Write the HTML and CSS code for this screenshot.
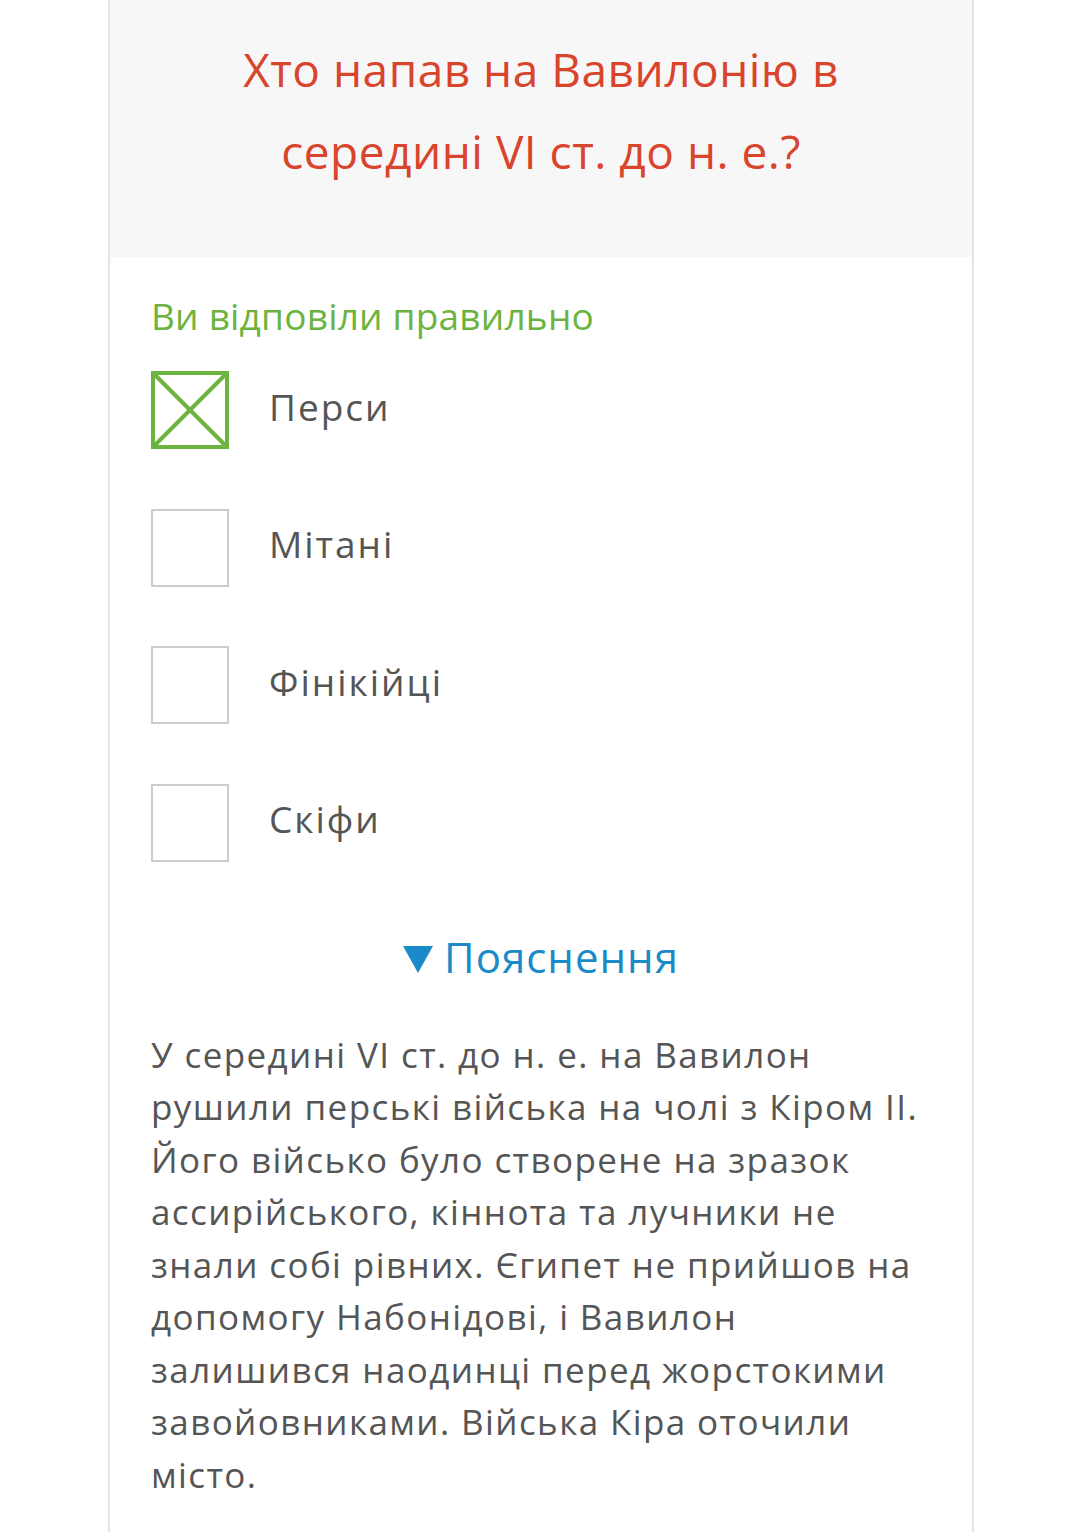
FILE: index.html
```html
<!DOCTYPE html>
<html lang="uk">
<head>
  <meta charset="UTF-8" />
  <meta name="viewport" content="width=device-width, initial-scale=1.0" />
  <title>Тест</title>
  <link rel="stylesheet" href="styles.css">
</head>
<body>

  <div class="quiz-card">
    <!-- Question -->
    <div class="question">
      <h1>Хто напав на Вавилонію в середині VI ст. до н. е.?</h1>
    </div>

    <div class="answers">
      <div class="result">Ви відповіли правильно</div>

      <div class="option">
        <span class="box checked">
          <svg viewBox="0 0 78 78" width="78" height="78">
            <rect x="2" y="2" width="74" height="74" fill="none" stroke="#6cb33f" stroke-width="4"/>
            <line x1="4" y1="4" x2="74" y2="74" stroke="#6cb33f" stroke-width="4"/>
            <line x1="74" y1="4" x2="4" y2="74" stroke="#6cb33f" stroke-width="4"/>
          </svg>
        </span>
        <span class="label">Перси</span>
      </div>

      <div class="option">
        <span class="box"></span>
        <span class="label">Мітані</span>
      </div>

      <div class="option">
        <span class="box"></span>
        <span class="label">Фінікійці</span>
      </div>

      <div class="option">
        <span class="box"></span>
        <span class="label">Скіфи</span>
      </div>
    </div>

    <!-- Explanation -->
    <div class="explain-toggle"><span class="arrow"></span>Пояснення</div>

    <p class="explain-text">У середині VI ст. до н. е. на Вавилон рушили перські війська на чолі з Кіром ІІ. Його військо було створене на зразок ассирійського, кіннота та лучники не знали собі рівних. Єгипет не прийшов на допомогу Набонідові, і Вавилон залишився наодинці перед жорстокими завойовниками. Війська Кіра оточили місто.</p>
  </div>

</body>
</html>
```

FILE: styles.css
```css
body {
  margin: 0;
  padding: 0;
  background: #fff;
  font-family: "Open Sans", "Noto Sans", sans-serif;
  color: #555;
}

.quiz-card {
  width: 862px;
  margin-left: 108px;
  min-height: 1532px;
  border-left: 2px solid #e4e4e4;
  border-right: 2px solid #e4e4e4;
  background: #fff;
}

/* Question */
.question {
  background-color: #f7f7f8;
  height: 257px;
  padding: 28px 110px 0;
  box-sizing: border-box;
  text-align: center;
}

.question h1 {
  margin: 0;
  font-weight: 400;
  font-size: 46px;
  letter-spacing: 0.5px;
  line-height: 82px;
  color: #d9442c;
}

/* Answers */
.answers {
  padding: 34px 42px 0 41px;
}

.result {
  color: #6cb33f;
  font-size: 37px;
  letter-spacing: 0.2px;
  line-height: 50px;
  margin-bottom: 30px;
}

.option {
  display: flex;
  align-items: center;
  height: 78px;
  margin-bottom: 59.5px;
}

.option:last-child {
  margin-bottom: 0;
}

.box {
  width: 78px;
  height: 78px;
  box-sizing: border-box;
  border: 2px solid #cccccc;
  flex-shrink: 0;
}

.box.checked {
  border: none;
}

.box svg {
  display: block;
}

.label {
  margin-left: 40px;
  margin-bottom: 8px;
  font-size: 37px;
  letter-spacing: 2px;
}

/* Explanation */
.explain-toggle {
  text-align: center;
  color: #1b8ac9;
  font-size: 42px;
  letter-spacing: 1px;
  margin-top: 66px;
}

.arrow {
  display: inline-block;
  width: 0;
  height: 0;
  border-left: 15px solid transparent;
  border-right: 15px solid transparent;
  border-top: 27px solid #1b8ac9;
  margin-right: 11px;
}

.explain-text {
  margin: 44px 42px 0 41px;
  font-size: 35px;
  letter-spacing: 1.4px;
  line-height: 52.5px;
  color: #555;
}
```
